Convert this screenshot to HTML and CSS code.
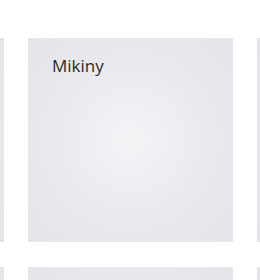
FILE: index.html
```html
<!DOCTYPE html>
<html lang="cs">
<head>
    <meta charset="UTF-8">
    <title>Kategorie</title>
    <link rel="stylesheet" href="styles.css">
</head>
<body>

<div class="grid">
    <div class="card"></div>
    <div class="card"><span class="card-title">Mikiny</span></div>
    <div class="card"></div>
    <div class="card"></div>
    <div class="card"></div>
    <div class="card"></div>
</div>

</body>
</html>
```

FILE: styles.css
```css
* {
    margin: 0;
    padding: 0;
    box-sizing: border-box;
}

body {
    background: #fff;
    font-family: "Open Sans", "Noto Sans", sans-serif;
    overflow: hidden;
}

.grid {
    display: grid;
    grid-template-columns: repeat(3, 205px);
    grid-auto-rows: 204px;
    gap: 25px 24px;
    margin-left: -201px;
    padding-top: 38px;
    width: 700px;
}

.card {
    background: radial-gradient(circle at 50% 50%, #f4f4f7 0%, #eaeaee 55%, #e4e4e9 100%);
    padding: 16px 24px;
}

.card-title {
    font-size: 17px;
    color: #2b2b2b;
}
```
